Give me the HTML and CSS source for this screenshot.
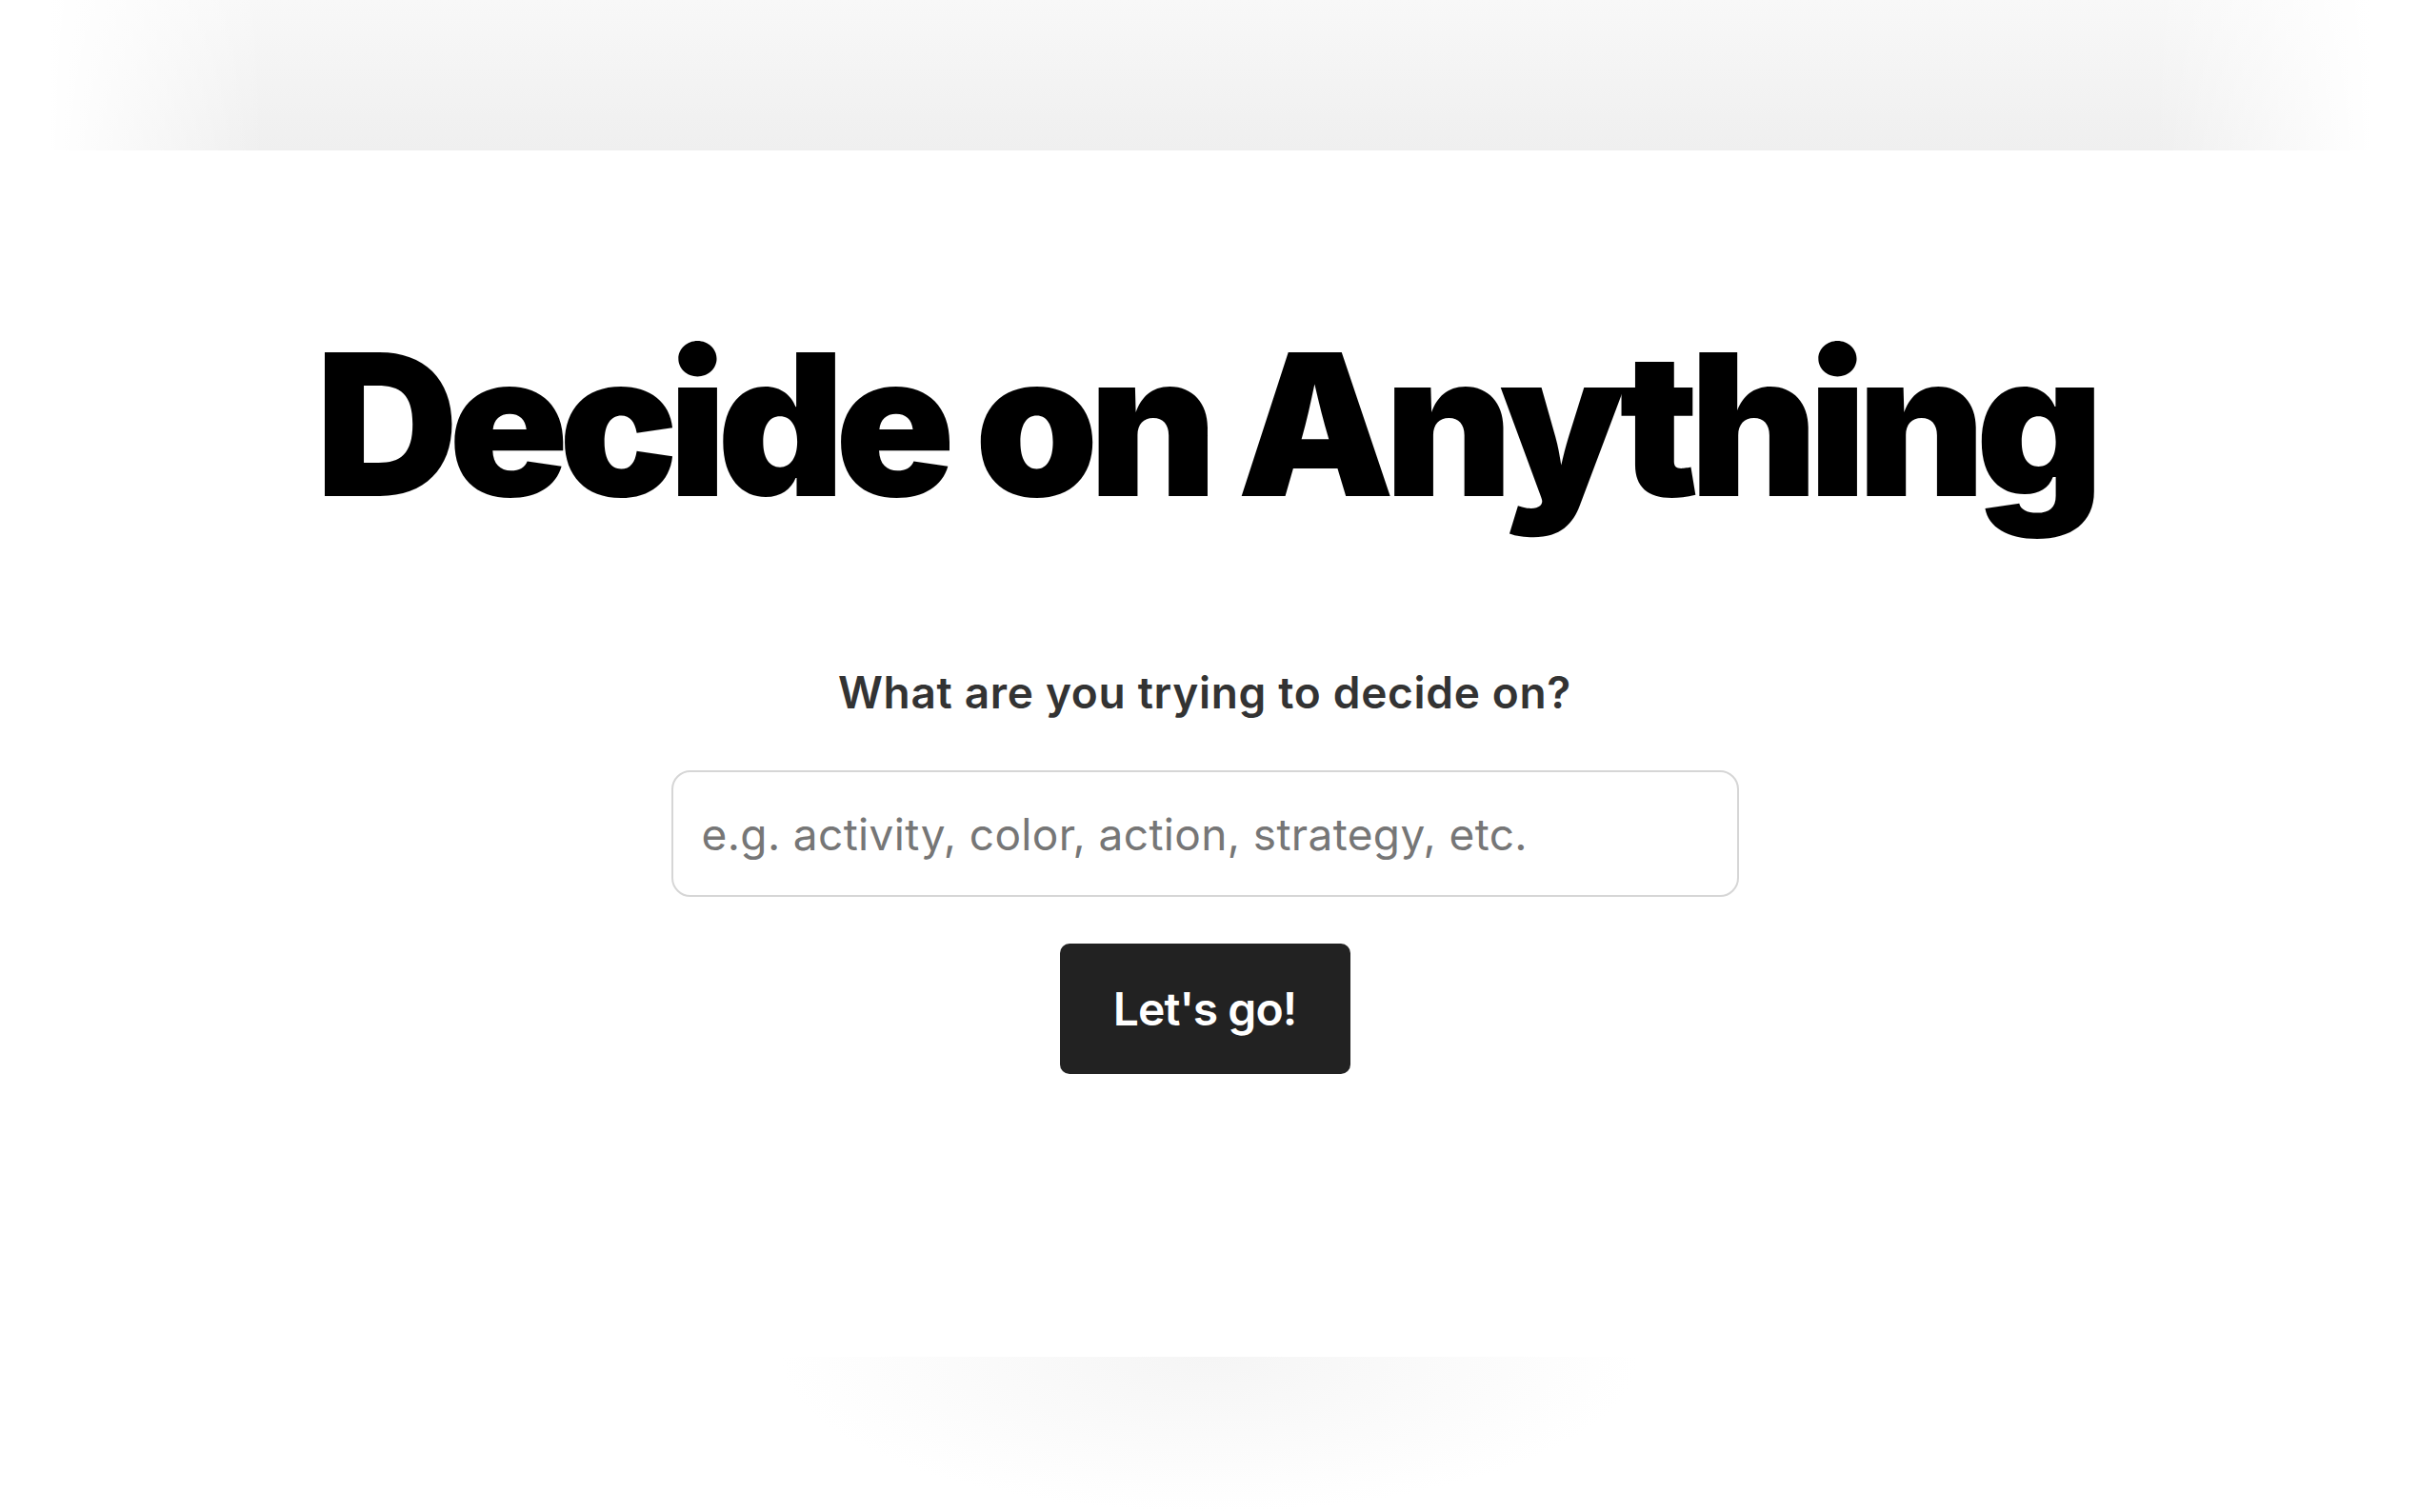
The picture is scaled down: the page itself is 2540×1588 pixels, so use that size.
FILE: index.html
```html
<!DOCTYPE html>
<html lang="en">
<head>
  <meta charset="UTF-8" />
  <meta name="viewport" content="width=device-width, initial-scale=1.0"/>
  <title>Decide on Anything</title>
  <link rel="stylesheet" href="styles.css">
</head>
<body>
  <div class="top-band"></div>

  <main class="hero">
    <h1 class="title">Decide on Anything</h1>

    <form class="ask" onsubmit="return false;">
      <label class="ask-label" for="topic">What are you trying to decide on?</label>
      <input class="ask-input" id="topic" type="text" placeholder="e.g. activity, color, action, strategy, etc." />
      <button class="ask-btn" type="submit">Let's go!</button>
    </form>
  </main>

  <div class="bottom-glow"></div>
</body>
</html>
```

FILE: styles.css
```css
:root {
  --ink: #000;
  --label: #333;
  --muted: #767676;
  --line: #d6d6d6;
  --btn: #222;
}

* {
  margin: 0;
  padding: 0;
  box-sizing: border-box;
}

html, body {
  height: 100%;
}

body {
  font-family: Inter, 'Noto Sans', sans-serif;
  background: #fff;
  color: var(--ink);
  display: flex;
  flex-direction: column;
  overflow: hidden;
}

/* faint grey band across the top */
.top-band {
  height: 158px;
  flex-shrink: 0;
  background:
    linear-gradient(to right, #fff 0, #fff 2%, rgba(255, 255, 255, 0) 11%, rgba(255, 255, 255, 0) 89%, #fff 98%, #fff 100%),
    linear-gradient(to bottom, #f8f8f8, #efefef);
}

.hero {
  flex: 1;
  display: flex;
  flex-direction: column;
  align-items: center;
  padding-top: 183px;
  padding-right: 10px;
}

.title {
  font-size: 208px;
  line-height: 1;
  font-weight: 900;
  letter-spacing: -0.05em;
  white-space: nowrap;
}

.ask {
  display: flex;
  flex-direction: column;
  align-items: center;
  margin-top: 155px;
}

.ask-label {
  font-size: 46px;
  line-height: 1;
  font-weight: 600;
  letter-spacing: 0.015em;
  color: var(--label);
  margin-bottom: 59px;
}

.ask-input {
  width: 1121px;
  height: 133px;
  padding: 0 30px;
  border: 2px solid var(--line);
  border-radius: 20px;
  font-family: inherit;
  font-size: 46px;
  letter-spacing: 0.008em;
  color: var(--ink);
  outline: none;
}

.ask-input::placeholder {
  color: var(--muted);
}

.ask-btn {
  margin-top: 49px;
  width: 305px;
  height: 137px;
  border: none;
  border-radius: 10px;
  background: var(--btn);
  color: #fff;
  font-family: inherit;
  font-size: 48px;
  font-weight: 600;
  letter-spacing: -0.02em;
  cursor: pointer;
}

/* soft shadow at the bottom */
.bottom-glow {
  flex-shrink: 0;
  height: 163px;
  width: 900px;
  margin: 0 auto;
  background: radial-gradient(ellipse 50% 100% at 50% 0, #f5f5f5, rgba(255, 255, 255, 0) 100%);
}
```
